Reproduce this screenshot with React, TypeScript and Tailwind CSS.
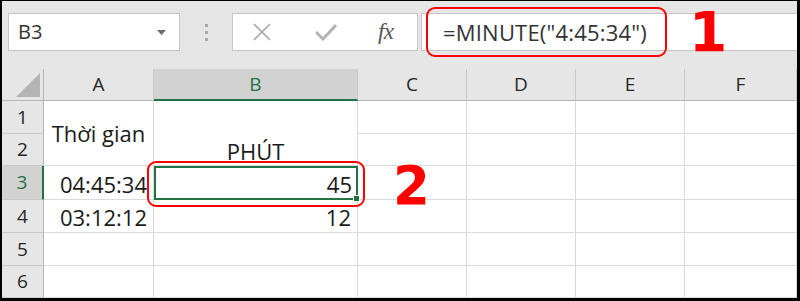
import React from 'react';

const cellFont = "font-['Open_Sans',sans-serif]";

function ColHead({ label, active }: { label: string; active?: boolean }) {
    return (
        <div
            className={`flex items-center justify-center border-r border-[#c9c9c9] text-[19px] ${
                active
                    ? 'bg-[#d2d2d2] text-[#217346] border-b-2 border-b-[#217346]'
                    : 'bg-[#e6e6e6] text-[#262626] border-b border-b-[#b5b5b5]'
            }`}
        >
            {label}
        </div>
    );
}

function RowHead({ n, active }: { n: number; active?: boolean }) {
    return (
        <div
            className={`flex items-center justify-center border-b border-[#c9c9c9] text-[19px] ${
                active
                    ? 'bg-[#d2d2d2] text-[#217346] border-r-2 border-r-[#217346]'
                    : 'bg-[#e6e6e6] text-[#262626] border-r border-r-[#b5b5b5]'
            }`}
        >
            {n}
        </div>
    );
}

function Cell({ children, className = '' }: { children?: React.ReactNode; className?: string }) {
    return (
        <div className={`flex bg-white border-r border-b border-[#dadada] text-[22px] leading-none text-[#1a1a1a] ${className}`}>
            {children}
        </div>
    );
}

function Blank({ count }: { count: number }) {
    return (
        <>
            {Array.from({ length: count }, (_, i) => (
                <Cell key={i} />
            ))}
        </>
    );
}

export default function App() {
    return (
        <div className={`relative w-[800px] h-[301px] overflow-hidden bg-[#e6e6e6] border-black border-t border-l-2 border-r-[3px] border-b-[3px] ${cellFont}`}>
            {/* Toolbar: name box + formula bar */}
            <div className="h-[68px] flex items-start pt-[12px] pl-[6px]">
                <div className="w-[172px] h-[38px] bg-white border border-[#c6c6c6] flex items-center justify-between pl-[9px] pr-[13px]">
                    <span className="text-[20px] text-[#333]">B3</span>
                    <svg width="9" height="5" viewBox="0 0 9 5">
                        <path d="M0 0 L9 0 L4.5 5 Z" fill="#6b6b6b" />
                    </svg>
                </div>
                <div className="w-[52px] h-[38px] flex flex-col items-center justify-center gap-[4px]">
                    <span className="w-[3px] h-[3px] bg-[#a8a8a8]" />
                    <span className="w-[3px] h-[3px] bg-[#a8a8a8]" />
                    <span className="w-[3px] h-[3px] bg-[#a8a8a8]" />
                </div>
                <div className="w-[186px] h-[38px] bg-white border border-[#c6c6c6] flex items-center">
                    <svg className="ml-[19px]" width="20" height="20" viewBox="0 0 20 20">
                        <path d="M2 2 L18 18 M18 2 L2 18" stroke="#a6a6a6" strokeWidth="1.6" />
                    </svg>
                    <svg className="ml-[43px]" width="22" height="18" viewBox="0 0 22 18">
                        <path d="M1 9 L8 16 L21 2" stroke="#b3b3b3" strokeWidth="3" fill="none" />
                    </svg>
                    <span className="ml-[41px] text-[23px] italic text-[#555] font-['Liberation_Serif',serif] tracking-tight">fx</span>
                </div>
                <div className="flex-1 ml-[3px] h-[38px] bg-white border-y border-l border-[#c6c6c6] flex items-center pl-[21px]">
                    <span className="text-[22px] text-[#333] tracking-[0.2px]">=MINUTE("4:45:34")</span>
                </div>
            </div>

            {/* Sheet grid */}
            <div className="grid grid-cols-[42px_110px_204px_109px_109px_109px_1fr] grid-rows-[32px_33px_32px_34px_33px_33px_32px]">
                <div className="bg-[#e6e6e6] border-r border-b border-[#b5b5b5] flex items-end justify-end pr-[3px] pb-[3px]">
                    <svg width="24" height="24" viewBox="0 0 24 24">
                        <path d="M24 0 L24 24 L0 24 Z" fill="#b4b4b4" />
                    </svg>
                </div>
                <ColHead label="A" />
                <ColHead label="B" active />
                <ColHead label="C" />
                <ColHead label="D" />
                <ColHead label="E" />
                <ColHead label="F" />

                {/* rows 1-2 */}
                <RowHead n={1} />
                <Cell className="row-span-2 items-center justify-center">Thời gian</Cell>
                <Cell className="row-span-2 items-end justify-center pb-[3px]">PHÚT</Cell>
                <Blank count={4} />
                <RowHead n={2} />
                <Blank count={4} />

                {/* row 3 */}
                <RowHead n={3} active />
                <Cell className="items-end justify-end pr-[6px] pb-[4px]">04:45:34</Cell>
                <div className="relative flex items-end justify-end bg-white border-2 border-[#217346] pr-[4px] pb-[3px] text-[22px] leading-none text-[#1a1a1a]">
                    45
                    <span className="absolute -right-[4px] -bottom-[4px] w-[7px] h-[7px] bg-[#217346] border border-white" />
                </div>
                <Blank count={4} />

                {/* row 4 */}
                <RowHead n={4} />
                <Cell className="items-end justify-end pr-[6px] pb-[4px]">03:12:12</Cell>
                <Cell className="items-end justify-end pr-[6px] pb-[4px]">12</Cell>
                <Blank count={4} />

                {/* rows 5-6 */}
                <RowHead n={5} />
                <Blank count={6} />
                <RowHead n={6} />
                <Blank count={6} />
            </div>

            {/* Red annotations */}
            <div className="absolute left-[424px] top-[6px] w-[241px] h-[50px] border-2 border-[#ff0000] rounded-[9px]" />
            <div className="absolute left-[687px] top-[4px] text-[55px] leading-none font-bold text-[#ff0000] font-['DejaVu_Sans',sans-serif]">1</div>
            <div className="absolute left-[145px] top-[160px] w-[218px] h-[46px] border-2 border-[#ff0000] rounded-[9px]" />
            <div className="absolute left-[391px] top-[158px] text-[53px] leading-none font-bold text-[#ff0000] font-['DejaVu_Sans',sans-serif] tracking-tighter">2</div>
        </div>
    );
}
